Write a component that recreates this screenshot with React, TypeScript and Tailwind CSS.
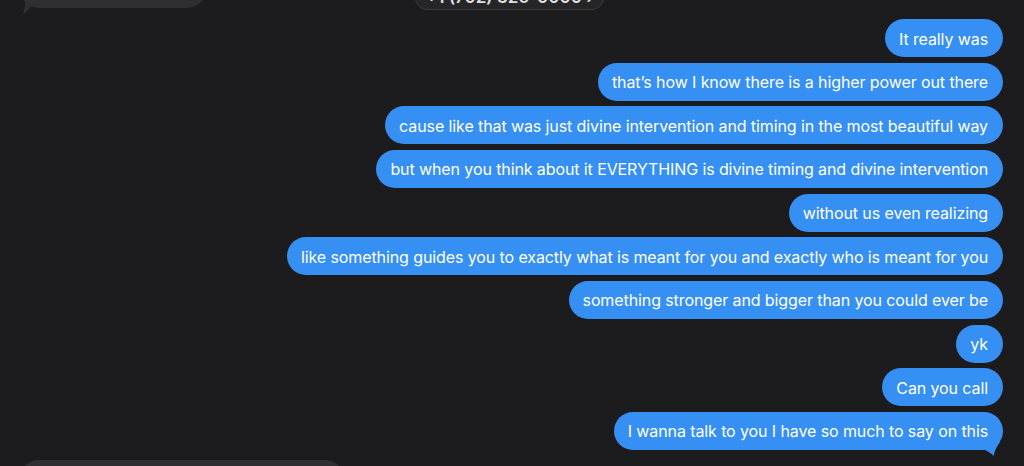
import React from "react";

const msgs = [
  "It really was",
  "that\u2019s how I know there is a higher power out there",
  "cause like that was just divine intervention and timing in the most beautiful way",
  "but when you think about it EVERYTHING is divine timing and divine intervention",
  "without us even realizing",
  "like something guides you to exactly what is meant for you and exactly who is meant for you",
  "something stronger and bigger than you could ever be",
  "yk",
  "Can you call",
  "I wanna talk to you I have so much to say on this",
];

export default function App() {
  return (
    <div
      className="w-[1024px] h-[466px] overflow-hidden bg-[#1c1c1e] text-white"
      style={{ fontFamily: "Inter, 'Noto Sans', sans-serif" }}
    >
      {/* top cut-off row */}
      <div className="relative h-[19px]">
        <div className="absolute left-[20px] top-[-30px] w-[186px] h-[38px] rounded-[19px] bg-[#2f2f31]" />
        <svg className="absolute left-[20px] top-[2px]" width="14" height="14" viewBox="0 0 14 14">
          <path d="M2 13 C4 10 5 6 5 0 L14 0 C11 5 7 10 2 13 Z" fill="#2f2f31" />
        </svg>
        <div className="absolute left-[415px] top-[-24px] w-[189px] h-[34px] rounded-[12px] bg-[#262628] border border-[#3a3a3c] flex items-start justify-center overflow-hidden">
          <span className="text-[17px] font-semibold text-[#e0e0e0] mt-[12px] leading-none">+1 (702) 325-0000 ›</span>
        </div>
      </div>
      <div className="flex flex-col items-end gap-[5.67px] pr-[21px]">
        {msgs.map((m, i) => (
          <div key={i} className="relative">
            <div className="h-[38px] rounded-[19px] bg-[#3690f3] pl-[14px] pr-[15px] pt-[1px] flex items-center text-[16px] tracking-[-0.1px] whitespace-nowrap text-white">
              {m}
            </div>
            {i === msgs.length - 1 && (
              <svg className="absolute right-0 bottom-[-7px]" width="20" height="20" viewBox="0 0 20 20">
                <path d="M2 13 C6 15 9 17 11 19 C11 16 12 12 17 5 L2 5 Z" fill="#3690f3" />
              </svg>
            )}
          </div>
        ))}
      </div>
      <div className="mt-[10px] ml-[20px] w-[324px] h-[38px] rounded-[19px] bg-[#2f2f31]" />
    </div>
  );
}
